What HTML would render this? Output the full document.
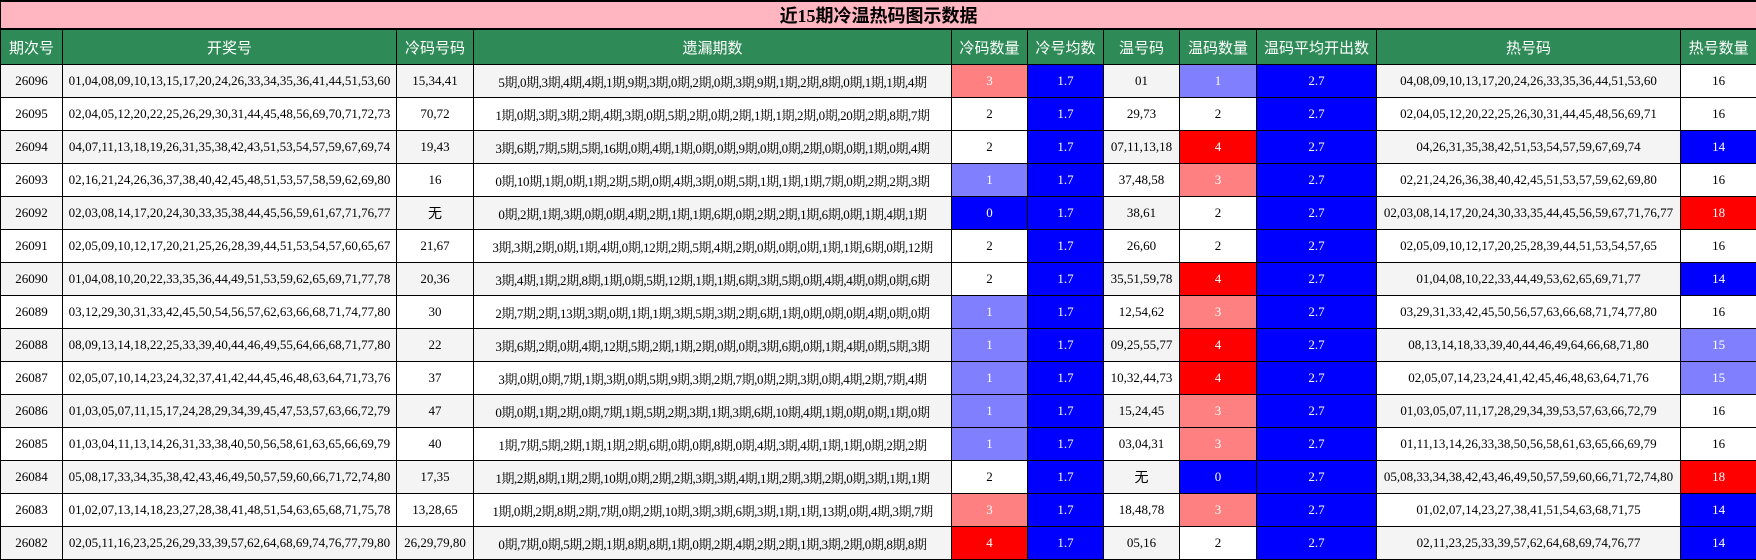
<!DOCTYPE html>
<html><head><meta charset="utf-8">
<style>
html,body{margin:0;padding:0;background:#fff;}
table{border-collapse:collapse;table-layout:fixed;width:1756px;font-family:"Liberation Serif","Noto Serif CJK SC",serif;font-size:13px;color:#000;}
td,th{border:1px solid #000;padding:0;text-align:center;white-space:nowrap;overflow:hidden;}
.t td{background:#ffb6c1;height:24px;font-weight:bold;font-size:18px;font-family:"Liberation Serif","Noto Sans CJK SC",serif;border-width:2px 1px;}
.h th{background:#2e8b57;color:#fff;height:34px;font-weight:normal;font-size:15px;font-family:"Liberation Sans","Noto Sans CJK SC",sans-serif;}
tr.d td{height:32px;}
tr.g td{background:#f4f4f4;}
td.m{letter-spacing:-0.4px;}
td.n{font-family:"Noto Sans CJK SC",sans-serif;font-size:14px;}
tr.d td.w{background:#fff;color:#000;}
tr.d td.lr{background:#ff8080;color:#fff;}
tr.d td.r{background:#ff0000;color:#fff;}
tr.d td.lb{background:#8080ff;color:#fff;}
tr.d td.b{background:#0000ff;color:#fff;}
</style></head><body>
<table>
<colgroup><col style="width:62px"><col style="width:334px"><col style="width:77px"><col style="width:478px"><col style="width:76px"><col style="width:76px"><col style="width:76px"><col style="width:77px"><col style="width:120px"><col style="width:304px"><col style="width:76px"></colgroup>
<tr class="t"><td colspan="11">近15期冷温热码图示数据</td></tr>
<tr class="h"><th>期次号</th><th>开奖号</th><th>冷码号码</th><th>遗漏期数</th><th>冷码数量</th><th>冷号均数</th><th>温号码</th><th>温码数量</th><th>温码平均开出数</th><th>热号码</th><th>热号数量</th></tr>
<tr class="d g"><td>26096</td><td>01,04,08,09,10,13,15,17,20,24,26,33,34,35,36,41,44,51,53,60</td><td>15,34,41</td><td class="m">5期,0期,3期,4期,4期,1期,9期,3期,0期,2期,0期,3期,9期,1期,2期,8期,0期,1期,1期,4期</td><td class="lr">3</td><td class="b">1.7</td><td>01</td><td class="lb">1</td><td class="b">2.7</td><td>04,08,09,10,13,17,20,24,26,33,35,36,44,51,53,60</td><td class="w">16</td></tr>
<tr class="d"><td>26095</td><td>02,04,05,12,20,22,25,26,29,30,31,44,45,48,56,69,70,71,72,73</td><td>70,72</td><td class="m">1期,0期,3期,3期,2期,4期,3期,0期,5期,2期,0期,2期,1期,1期,2期,0期,20期,2期,8期,7期</td><td class="w">2</td><td class="b">1.7</td><td>29,73</td><td class="w">2</td><td class="b">2.7</td><td>02,04,05,12,20,22,25,26,30,31,44,45,48,56,69,71</td><td class="w">16</td></tr>
<tr class="d g"><td>26094</td><td>04,07,11,13,18,19,26,31,35,38,42,43,51,53,54,57,59,67,69,74</td><td>19,43</td><td class="m">3期,6期,7期,5期,5期,16期,0期,4期,1期,0期,0期,9期,0期,0期,2期,0期,0期,1期,0期,4期</td><td class="w">2</td><td class="b">1.7</td><td>07,11,13,18</td><td class="r">4</td><td class="b">2.7</td><td>04,26,31,35,38,42,51,53,54,57,59,67,69,74</td><td class="b">14</td></tr>
<tr class="d"><td>26093</td><td>02,16,21,24,26,36,37,38,40,42,45,48,51,53,57,58,59,62,69,80</td><td>16</td><td class="m">0期,10期,1期,0期,1期,2期,5期,0期,4期,3期,0期,5期,1期,1期,1期,7期,0期,2期,2期,3期</td><td class="lb">1</td><td class="b">1.7</td><td>37,48,58</td><td class="lr">3</td><td class="b">2.7</td><td>02,21,24,26,36,38,40,42,45,51,53,57,59,62,69,80</td><td class="w">16</td></tr>
<tr class="d g"><td>26092</td><td>02,03,08,14,17,20,24,30,33,35,38,44,45,56,59,61,67,71,76,77</td><td class="n">无</td><td class="m">0期,2期,1期,3期,0期,0期,4期,2期,1期,1期,6期,0期,2期,2期,1期,6期,0期,1期,4期,1期</td><td class="b">0</td><td class="b">1.7</td><td>38,61</td><td class="w">2</td><td class="b">2.7</td><td>02,03,08,14,17,20,24,30,33,35,44,45,56,59,67,71,76,77</td><td class="r">18</td></tr>
<tr class="d"><td>26091</td><td>02,05,09,10,12,17,20,21,25,26,28,39,44,51,53,54,57,60,65,67</td><td>21,67</td><td class="m">3期,3期,2期,0期,1期,4期,0期,12期,2期,5期,4期,2期,0期,0期,0期,1期,1期,6期,0期,12期</td><td class="w">2</td><td class="b">1.7</td><td>26,60</td><td class="w">2</td><td class="b">2.7</td><td>02,05,09,10,12,17,20,25,28,39,44,51,53,54,57,65</td><td class="w">16</td></tr>
<tr class="d g"><td>26090</td><td>01,04,08,10,20,22,33,35,36,44,49,51,53,59,62,65,69,71,77,78</td><td>20,36</td><td class="m">3期,4期,1期,2期,8期,1期,0期,5期,12期,1期,1期,6期,3期,5期,0期,4期,4期,0期,0期,6期</td><td class="w">2</td><td class="b">1.7</td><td>35,51,59,78</td><td class="r">4</td><td class="b">2.7</td><td>01,04,08,10,22,33,44,49,53,62,65,69,71,77</td><td class="b">14</td></tr>
<tr class="d"><td>26089</td><td>03,12,29,30,31,33,42,45,50,54,56,57,62,63,66,68,71,74,77,80</td><td>30</td><td class="m">2期,7期,2期,13期,3期,0期,1期,1期,3期,5期,3期,2期,6期,1期,0期,0期,0期,4期,0期,0期</td><td class="lb">1</td><td class="b">1.7</td><td>12,54,62</td><td class="lr">3</td><td class="b">2.7</td><td>03,29,31,33,42,45,50,56,57,63,66,68,71,74,77,80</td><td class="w">16</td></tr>
<tr class="d g"><td>26088</td><td>08,09,13,14,18,22,25,33,39,40,44,46,49,55,64,66,68,71,77,80</td><td>22</td><td class="m">3期,6期,2期,0期,4期,12期,5期,2期,1期,2期,0期,0期,3期,6期,0期,1期,4期,0期,5期,3期</td><td class="lb">1</td><td class="b">1.7</td><td>09,25,55,77</td><td class="r">4</td><td class="b">2.7</td><td>08,13,14,18,33,39,40,44,46,49,64,66,68,71,80</td><td class="lb">15</td></tr>
<tr class="d"><td>26087</td><td>02,05,07,10,14,23,24,32,37,41,42,44,45,46,48,63,64,71,73,76</td><td>37</td><td class="m">3期,0期,0期,7期,1期,3期,0期,5期,9期,3期,2期,7期,0期,2期,3期,0期,4期,2期,7期,4期</td><td class="lb">1</td><td class="b">1.7</td><td>10,32,44,73</td><td class="r">4</td><td class="b">2.7</td><td>02,05,07,14,23,24,41,42,45,46,48,63,64,71,76</td><td class="lb">15</td></tr>
<tr class="d g"><td>26086</td><td>01,03,05,07,11,15,17,24,28,29,34,39,45,47,53,57,63,66,72,79</td><td>47</td><td class="m">0期,0期,1期,2期,0期,7期,1期,5期,2期,3期,1期,3期,6期,10期,4期,1期,0期,0期,1期,0期</td><td class="lb">1</td><td class="b">1.7</td><td>15,24,45</td><td class="lr">3</td><td class="b">2.7</td><td>01,03,05,07,11,17,28,29,34,39,53,57,63,66,72,79</td><td class="w">16</td></tr>
<tr class="d"><td>26085</td><td>01,03,04,11,13,14,26,31,33,38,40,50,56,58,61,63,65,66,69,79</td><td>40</td><td class="m">1期,7期,5期,2期,1期,1期,2期,6期,0期,0期,8期,0期,4期,3期,4期,1期,1期,0期,2期,2期</td><td class="lb">1</td><td class="b">1.7</td><td>03,04,31</td><td class="lr">3</td><td class="b">2.7</td><td>01,11,13,14,26,33,38,50,56,58,61,63,65,66,69,79</td><td class="w">16</td></tr>
<tr class="d g"><td>26084</td><td>05,08,17,33,34,35,38,42,43,46,49,50,57,59,60,66,71,72,74,80</td><td>17,35</td><td class="m">1期,2期,8期,1期,2期,10期,0期,2期,2期,3期,3期,4期,1期,2期,3期,2期,0期,3期,1期,1期</td><td class="w">2</td><td class="b">1.7</td><td class="n">无</td><td class="b">0</td><td class="b">2.7</td><td>05,08,33,34,38,42,43,46,49,50,57,59,60,66,71,72,74,80</td><td class="r">18</td></tr>
<tr class="d"><td>26083</td><td>01,02,07,13,14,18,23,27,28,38,41,48,51,54,63,65,68,71,75,78</td><td>13,28,65</td><td class="m">1期,0期,2期,8期,2期,7期,0期,2期,10期,3期,3期,6期,3期,1期,1期,13期,0期,4期,3期,7期</td><td class="lr">3</td><td class="b">1.7</td><td>18,48,78</td><td class="lr">3</td><td class="b">2.7</td><td>01,02,07,14,23,27,38,41,51,54,63,68,71,75</td><td class="b">14</td></tr>
<tr class="d g"><td>26082</td><td>02,05,11,16,23,25,26,29,33,39,57,62,64,68,69,74,76,77,79,80</td><td>26,29,79,80</td><td class="m">0期,7期,0期,5期,2期,1期,8期,8期,1期,0期,2期,4期,2期,2期,1期,3期,2期,0期,8期,8期</td><td class="r">4</td><td class="b">1.7</td><td>05,16</td><td class="w">2</td><td class="b">2.7</td><td>02,11,23,25,33,39,57,62,64,68,69,74,76,77</td><td class="b">14</td></tr>
</table>
</body></html>
